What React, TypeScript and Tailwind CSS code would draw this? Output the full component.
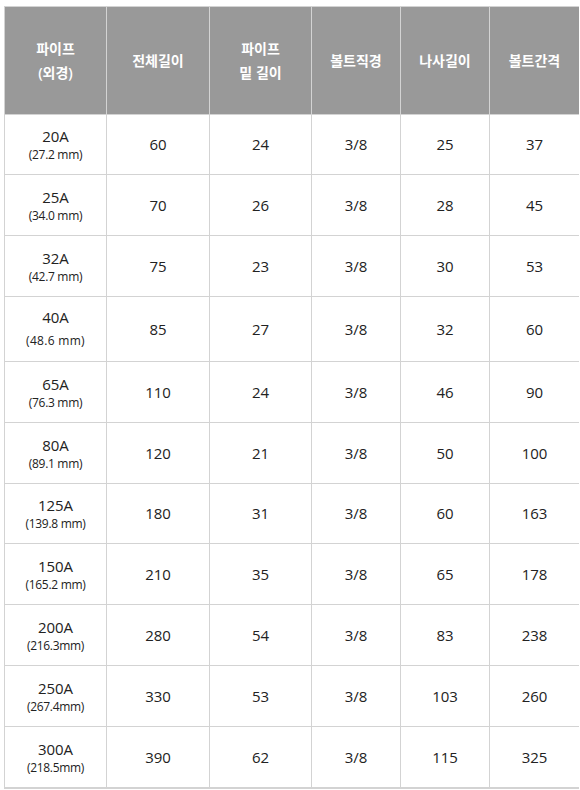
import React from "react";

const rows: { a: string; mm: string; v: string[]; tall?: boolean }[] = [
  { a: "20A", mm: "(27.2 mm)", v: ["60", "24", "3/8", "25", "37"] },
  { a: "25A", mm: "(34.0 mm)", v: ["70", "26", "3/8", "28", "45"] },
  { a: "32A", mm: "(42.7 mm)", v: ["75", "23", "3/8", "30", "53"] },
  { a: "40A", mm: "(48.6 mm)", v: ["85", "27", "3/8", "32", "60"], tall: true },
  { a: "65A", mm: "(76.3 mm)", v: ["110", "24", "3/8", "46", "90"] },
  { a: "80A", mm: "(89.1 mm)", v: ["120", "21", "3/8", "50", "100"] },
  { a: "125A", mm: "(139.8 mm)", v: ["180", "31", "3/8", "60", "163"] },
  { a: "150A", mm: "(165.2 mm)", v: ["210", "35", "3/8", "65", "178"] },
  { a: "200A", mm: "(216.3mm)", v: ["280", "54", "3/8", "83", "238"] },
  { a: "250A", mm: "(267.4mm)", v: ["330", "53", "3/8", "103", "260"] },
  { a: "300A", mm: "(218.5mm)", v: ["390", "62", "3/8", "115", "325"] },
];

const headers: string[][] = [
  ["파이프", "(외경)"],
  ["전체길이"],
  ["파이프", "밑 길이"],
  ["볼트직경"],
  ["나사길이"],
  ["볼트간격"],
];

export default function App() {
  return (
    <div
      className="w-[580px] h-[790px] bg-white pt-[6px] pl-[4px]"
      style={{ fontFamily: '"Open Sans", "Noto Sans CJK KR", sans-serif' }}
    >
      <div className="w-[575px] grid grid-cols-[101px_102px_101px_88px_88px_89px] grid-rows-[107px_59px_60px_60px_64px_60px_60px_59px_60px_60px_60px_60px] gap-px bg-[#d3d3d3] pt-px pl-px pr-px pb-[2px]">
        {headers.map((h, i) => (
          <div
            key={i}
            className="bg-[#999999] flex flex-col items-center justify-center text-white text-[14px] leading-[24px] font-semibold"
          >
            {h.map((t, j) => (
              <span key={j}>{t}</span>
            ))}
          </div>
        ))}
        {rows.map((r, i) => (
          <React.Fragment key={i}>
            <div className="bg-white flex flex-col items-center justify-center text-[#222]">
              <span className="text-[15px] leading-[20px]">{r.a}</span>
              <span
                className={
                  r.tall
                    ? "text-[12px] leading-[20px] mt-[4px] tracking-[0.3px]"
                    : "text-[12px] leading-[17px] tracking-[-0.3px]"
                }
              >
                {r.mm}
              </span>
            </div>
            {r.v.map((v, j) => (
              <div
                key={j}
                className="bg-white flex items-center justify-center text-[15px] text-[#222]"
              >
                {v}
              </div>
            ))}
          </React.Fragment>
        ))}
      </div>
    </div>
  );
}
